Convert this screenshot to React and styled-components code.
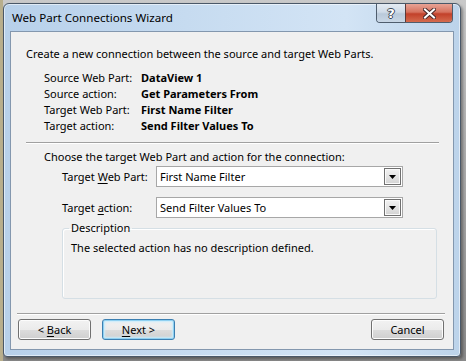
import React from 'react';
import styled, { createGlobalStyle } from 'styled-components';

const GlobalStyle = createGlobalStyle`
  body {
    margin: 0;
    font-family: 'Noto Sans', 'Open Sans', sans-serif;
    font-size: 11px;
    color: #000;
  }
`;

const Desktop = styled.div`
  width: 466px;
  height: 361px;
  box-sizing: border-box;
  padding: 3px 5px 4px 3px;
  background:
    linear-gradient(to right, #b8ae8c 0 3px, transparent 3px),
    linear-gradient(to bottom, #c9c9c9, #8a8a8a);
`;

const Window = styled.div`
  box-sizing: border-box;
  width: 458px;
  height: 354px;
  border: 1px solid #4a5868;
  border-radius: 6px 6px 4px 4px;
  padding: 0 6px 6px 6px;
  display: flex;
  flex-direction: column;
  background: linear-gradient(to right, #b7d0ea 0%, #c6dbf0 40%, #d3e4f5 75%, #bcd3ea 100%);
  box-shadow: inset 0 0 0 1px rgba(255, 255, 255, 0.55), 2px 2px 3px rgba(0, 0, 0, 0.35);
`;

const TitleBar = styled.div`
  height: 27px;
  display: flex;
  align-items: flex-start;
`;

const Title = styled.div`
  flex: 1;
  padding-left: 2px;
  line-height: 27px;
  font-size: 11.6px;
  color: #000;
`;

const Caption = styled.div`
  display: flex;
  margin-right: 1px;
  height: 18px;
  border: 1px solid #4f5d6d;
  border-top: none;
  border-radius: 0 0 4px 4px;
  overflow: hidden;
`;

const CaptionButton = styled.div`
  width: ${p => p.$w}px;
  height: 18px;
  display: flex;
  align-items: center;
  justify-content: center;
  box-sizing: border-box;
  background: ${p => p.$close
    ? 'linear-gradient(to bottom, #e8a395 0%, #d6735f 45%, #c2412a 55%, #d56b4e 100%)'
    : 'linear-gradient(to bottom, #e4ebf3 0%, #cfdbe8 45%, #b9c9da 55%, #c9d7e6 100%)'};
  border-left: ${p => p.$close ? '1px solid #5a3a3a' : 'none'};
`;

const HelpGlyph = styled.span`
  font-family: 'DejaVu Sans', sans-serif;
  font-weight: bold;
  font-size: 13px;
  line-height: 1;
  color: #fff;
  text-shadow: 1px 0 0 #3c4654, -1px 0 0 #3c4654, 0 1px 0 #3c4654, 0 -1px 0 #3c4654;
`;

const Client = styled.div`
  flex: 1;
  border: 1px solid #8397ae;
  background: #f0f0f0;
  display: flex;
  flex-direction: column;
`;

const Intro = styled.div`
  margin: 14px 0 0 15px;
  line-height: 16px;
`;

const InfoGrid = styled.div`
  margin: 8px 0 0 33px;
  display: grid;
  grid-template-columns: 97px auto;
  grid-auto-rows: 16px;
  line-height: 16px;
`;

const Value = styled.span`
  font-weight: bold;
`;

const Separator = styled.div`
  margin: ${p => p.$top}px 0 0 ${p => p.$left}px;
  width: ${p => p.$width}px;
  border-top: 1px solid #a0a0a0;
  border-bottom: 1px solid #ffffff;
`;

const Prompt = styled.div`
  margin: 5px 0 0 33px;
  line-height: 16px;
`;

const FieldRow = styled.div`
  display: flex;
  align-items: center;
  margin: ${p => p.$top}px 0 0 51px;
  height: 21px;
`;

const FieldLabel = styled.label`
  width: 94px;
  line-height: 16px;
`;

const Combo = styled.div`
  box-sizing: border-box;
  width: 247px;
  height: 21px;
  border: 1px solid #a7a7a7;
  background: #fff;
  padding: 1px 1px 1px 3px;
  display: flex;
  align-items: center;
`;

const ComboText = styled.span`
  flex: 1;
  line-height: 16px;
`;

const DropButton = styled.div`
  box-sizing: border-box;
  width: 17px;
  height: 17px;
  border: 1px solid #707070;
  background: linear-gradient(to bottom, #f2f2f2 0%, #e4e4e4 50%, #d3d3d3 100%);
  box-shadow: inset 0 0 0 1px #fafafa;
  display: flex;
  align-items: center;
  justify-content: center;
`;

const Group = styled.fieldset`
  box-sizing: border-box;
  margin: 2px 0 0 51px;
  width: 375px;
  height: 79px;
  padding: 0 6px;
  border: 1px solid #d5dfe5;
  border-radius: 3px;
  box-shadow: inset 1px 1px 0 #fff;
  min-inline-size: 0;
`;

const Legend = styled.legend`
  padding: 0 2px;
  line-height: 16px;
`;

const GroupText = styled.div`
  margin-top: 4px;
  padding-left: 2px;
  line-height: 16px;
`;

const ButtonRow = styled.div`
  display: flex;
  margin: 4px 0 0 7px;
  width: 426px;
  gap: 11px;
`;

const Button = styled.button`
  box-sizing: border-box;
  width: 73px;
  height: 21px;
  padding: 0;
  font-family: inherit;
  font-size: 11px;
  color: #000;
  border-radius: 3px;
  border: 1px solid ${p => p.$default ? '#3c7fb1' : '#707070'};
  background: linear-gradient(to bottom, #f2f2f2 0%, #ebebeb 50%, #dddddd 51%, #cfcfcf 100%);
  box-shadow: ${p => p.$default
    ? 'inset 0 0 0 1px #8fd0f1, inset 0 0 2px 2px #c8ebfb'
    : 'inset 0 0 0 1px #fcfcfc'};
  &:last-child {
    margin-left: auto;
  }
`;

const Key = styled.u`
  text-decoration: underline;
  text-underline-offset: 2px;
`;

const Arrow = () => (
  <svg width="7" height="4" viewBox="0 0 7 4">
    <path d="M0 0h7L3.5 4z" fill="#000" />
  </svg>
);

const CloseX = () => (
  <svg width="13" height="11" viewBox="0 0 13 11">
    <path d="M2 1.5l9 8M11 1.5l-9 8" stroke="#4a2a2a" strokeWidth="4" strokeLinecap="square" />
    <path d="M2 1.5l9 8M11 1.5l-9 8" stroke="#fff" strokeWidth="2" strokeLinecap="square" />
  </svg>
);

const info = [
  ['Source Web Part:', 'DataView 1'],
  ['Source action:', 'Get Parameters From'],
  ['Target Web Part:', 'First Name Filter'],
  ['Target action:', 'Send Filter Values To'],
];

export default function App() {
  return (
    <Desktop>
      <GlobalStyle />
      <Window>
        <TitleBar>
          <Title>Web Part Connections Wizard</Title>
          <Caption>
            <CaptionButton $w={28}><HelpGlyph>?</HelpGlyph></CaptionButton>
            <CaptionButton $w={47} $close><CloseX /></CaptionButton>
          </Caption>
        </TitleBar>
        <Client>
          <Intro>Create a new connection between the source and target Web Parts.</Intro>
          <InfoGrid>
            {info.map(([k, v]) => (
              <React.Fragment key={k}>
                <span>{k}</span>
                <Value>{v}</Value>
              </React.Fragment>
            ))}
          </InfoGrid>
          <Separator $top={8} $left={15} $width={413} />
          <Prompt>Choose the target Web Part and action for the connection:</Prompt>
          <FieldRow $top={1}>
            <FieldLabel>Target <Key>W</Key>eb Part:</FieldLabel>
            <Combo>
              <ComboText>First Name Filter</ComboText>
              <DropButton><Arrow /></DropButton>
            </Combo>
          </FieldRow>
          <FieldRow $top={10}>
            <FieldLabel>Target <Key>a</Key>ction:</FieldLabel>
            <Combo>
              <ComboText>Send Filter Values To</ComboText>
              <DropButton><Arrow /></DropButton>
            </Combo>
          </FieldRow>
          <Group>
            <Legend>Description</Legend>
            <GroupText>The selected action has no description defined.</GroupText>
          </Group>
          <Separator $top={14} $left={6} $width={428} />
          <ButtonRow>
            <Button>&lt; <Key>B</Key>ack</Button>
            <Button $default><Key>N</Key>ext &gt;</Button>
            <Button>Cancel</Button>
          </ButtonRow>
        </Client>
      </Window>
    </Desktop>
  );
}
